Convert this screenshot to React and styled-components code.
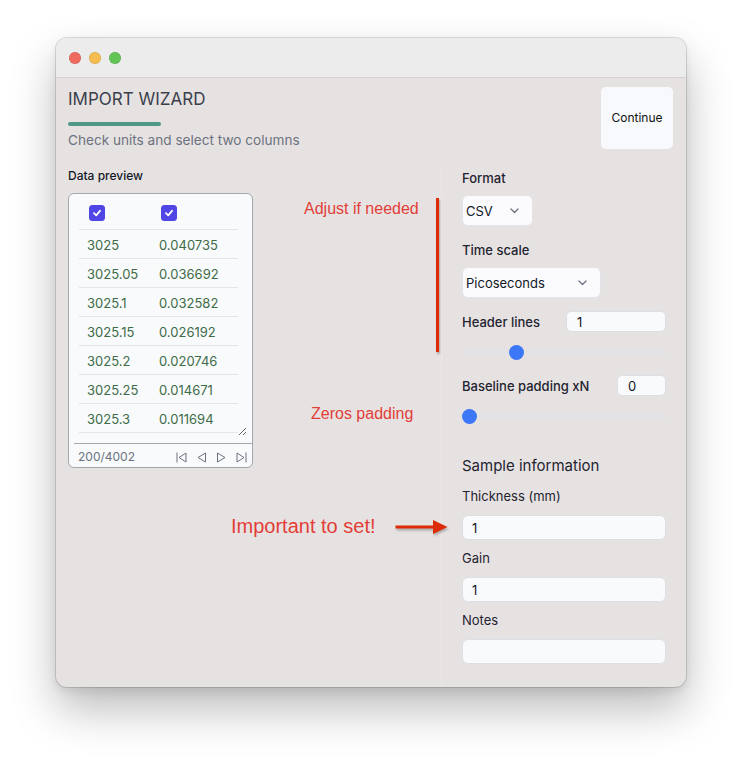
import React from 'react';
import styled, { createGlobalStyle } from 'styled-components';

const GlobalStyle = createGlobalStyle`
  html, body {
    margin: 0;
    padding: 0;
    background: #ffffff;
  }
  body {
    font-family: Inter, "Noto Sans", "DejaVu Sans", sans-serif;
    color: #1f2430;
  }
  * {
    box-sizing: border-box;
  }
`;

const Page = styled.div`
  width: 742px;
  height: 761px;
  padding: 38px 56px 0;
`;

const Window = styled.div`
  width: 630px;
  height: 649px;
  display: flex;
  flex-direction: column;
  border-radius: 11px;
  overflow: hidden;
  background: #e7e2e2;
  box-shadow: 0 0 0 1px rgba(0, 0, 0, 0.13), 0 22px 45px rgba(0, 0, 0, 0.27),
    0 4px 10px rgba(0, 0, 0, 0.08);
`;

const TitleBar = styled.div`
  flex: none;
  height: 40px;
  display: flex;
  align-items: center;
  gap: 8px;
  padding-left: 13px;
  background: #ececec;
  border-bottom: 1px solid #d6d2d2;
`;

const Light = styled.span`
  width: 12px;
  height: 12px;
  border-radius: 50%;
  background: ${(props) => props.$color};
  box-shadow: inset 0 0 0 0.5px rgba(0, 0, 0, 0.15);
`;

const Body = styled.div`
  position: relative;
  flex: 1;
  display: flex;
  flex-direction: column;
`;

const Header = styled.div`
  display: flex;
  justify-content: space-between;
  align-items: flex-start;
  padding: 9px 13px 0 12px;
`;

const Title = styled.h1`
  margin: 0;
  font-size: 17px;
  line-height: 24px;
  font-weight: 400;
  color: #3a3f4c;
`;

const Accent = styled.div`
  width: 93px;
  height: 4px;
  margin-top: 11px;
  border-radius: 2px;
  background: #4f9787;
`;

const Subtitle = styled.p`
  margin: 4px 0 0;
  font-size: 13.6px;
  line-height: 20px;
  color: #6b7280;
`;

const ContinueButton = styled.button`
  width: 72px;
  height: 62px;
  padding: 0 0 2px;
  border: none;
  border-radius: 5px;
  background: #f8f9fc;
  font-family: inherit;
  font-size: 12px;
  color: #111111;
`;

const Columns = styled.div`
  flex: 1;
  display: grid;
  grid-template-columns: 385px 1fr;
  margin-top: 15px;
`;

const LeftPane = styled.div`
  padding: 3px 0 0 12px;
`;

const SectionLabel = styled.div`
  font-size: 12px;
  line-height: 16px;
  font-weight: 500;
  color: #111827;
`;

const Card = styled.div`
  width: 185px;
  margin-top: 9px;
  padding-top: 7px;
  border: 1px solid #a3a7ae;
  border-radius: 6px;
  background: #f8fafc;
`;

const ScrollArea = styled.div`
  height: 235px;
  margin: 0 5px;
  padding: 0 9px 0 5px;
  overflow: hidden;
  resize: vertical;
`;

const Row = styled.div`
  display: grid;
  grid-template-columns: 72px 1fr;
  height: 29px;
  border-bottom: 1px solid #e2e5ea;
  align-items: ${(props) => (props.$head ? 'start' : 'center')};
  padding-top: ${(props) => (props.$head ? '3.5px' : '1px')};
`;

const Cell = styled.div`
  padding-left: 8px;
  font-size: 13px;
  line-height: 28px;
  color: #3e6b48;
`;

const Check = styled.span`
  display: flex;
  align-items: center;
  justify-content: center;
  width: 16px;
  height: 16px;
  margin-left: 10px;
  border-radius: 3.5px;
  background: #4f46e5;
`;

const Footer = styled.div`
  display: flex;
  justify-content: space-between;
  align-items: center;
  margin: 7px 0 0 5px;
  padding: 5px 5px 2px 4px;
  border-top: 1px solid #a3a7ae;
  font-size: 12px;
  line-height: 16px;
  color: #6b7280;
`;

const Pager = styled.div`
  display: flex;
  gap: 9px;
`;

const RightPane = styled.div`
  display: flex;
  flex-direction: column;
  padding: 4px 20px 0;
  border-left: 1px solid #ece8e8;
`;

const FieldLabel = styled.div`
  margin-top: ${(props) => props.$gap || 0}px;
  font-size: 13px;
  line-height: 18px;
  font-weight: 500;
  color: #1f2430;
`;

const Select = styled.div`
  width: ${(props) => props.$width}px;
  height: 31px;
  margin-top: 8px;
  display: flex;
  align-items: center;
  justify-content: space-between;
  padding: 0 13px 0 3px;
  border: 1px solid #e2e3e8;
  border-radius: 6px;
  background: #fbfbfd;
  font-size: 13px;
  color: #111827;
`;

const InlineRow = styled.div`
  display: flex;
  align-items: center;
  justify-content: space-between;
  height: 21px;
  margin-top: ${(props) => props.$gap}px;
`;

const SmallInput = styled.input`
  width: ${(props) => props.$width}px;
  height: 21px;
  padding: 0 10px;
  border: 1px solid #dcdfe4;
  border-radius: 5px;
  background: #f9fafb;
  font-family: inherit;
  font-size: 13px;
  color: #111827;
  outline: none;
`;

const SliderBox = styled.div`
  position: relative;
  display: flex;
  align-items: center;
  height: 16px;
  margin-top: 12px;
`;

const Track = styled.div`
  width: 100%;
  height: 5px;
  border-radius: 3px;
  background: #e3e2e5;
`;

const Thumb = styled.span`
  position: absolute;
  top: 0.5px;
  width: 15px;
  height: 15px;
  border-radius: 50%;
  background: #3b77f6;
`;

const Heading = styled.h2`
  margin: 30px 0 0;
  font-size: 15px;
  line-height: 24px;
  font-weight: 400;
  color: #1f2430;
`;

const InfoLabel = styled.div`
  margin-top: 8px;
  font-size: 13px;
  line-height: 20px;
  color: #1f2430;
`;

const TextInput = styled.input`
  width: 100%;
  height: 25px;
  margin-top: 9px;
  padding: 0 9px;
  border: 1px solid #dcdfe4;
  border-radius: 6px;
  background: #f9fafb;
  font-family: inherit;
  font-size: 13px;
  color: #111827;
  outline: none;
`;

const Note = styled.span`
  position: absolute;
  left: ${(props) => props.$left}px;
  top: ${(props) => props.$top}px;
  font-family: "Liberation Sans", Arial, sans-serif;
  font-size: ${(props) => props.$size}px;
  line-height: 1;
  color: #e23e38;
  white-space: nowrap;
`;

const Marker = styled.div`
  position: absolute;
  left: 380px;
  top: 120px;
  width: 3px;
  height: 154px;
  background: #dc2b05;
  box-shadow: 1px 2px 2px rgba(0, 0, 0, 0.25);
`;

const ArrowMark = styled.svg`
  position: absolute;
  left: 339px;
  top: 441px;
  filter: drop-shadow(1px 2px 1px rgba(0, 0, 0, 0.25));
`;

const rows = [
  ['3025', '0.040735'],
  ['3025.05', '0.036692'],
  ['3025.1', '0.032582'],
  ['3025.15', '0.026192'],
  ['3025.2', '0.020746'],
  ['3025.25', '0.014671'],
  ['3025.3', '0.011694'],
];

const CheckMark = () => (
  <Check>
    <svg width="10" height="10" viewBox="0 0 10 10">
      <polyline points="2,5.2 4.2,7.3 8,2.8" fill="none" stroke="#fff" strokeWidth="1.8" strokeLinecap="round" strokeLinejoin="round" />
    </svg>
  </Check>
);

const Chevron = () => (
  <svg width="9" height="6" viewBox="0 0 9 6">
    <polyline points="1,1 4.5,4.5 8,1" fill="none" stroke="#6b7280" strokeWidth="1.3" strokeLinecap="round" strokeLinejoin="round" />
  </svg>
);

const PagerIcon = ({ kind }) => {
  const tri = {
    first: '10,1 3,5.5 10,10',
    prev: '9.5,1 2,5.5 9.5,10',
    next: '1.5,1 9,5.5 1.5,10',
    last: '1,1 8,5.5 1,10',
  }[kind];
  return (
    <svg width="11" height="11" viewBox="0 0 11 11" fill="none" stroke="#6b7280" strokeWidth="1" strokeLinejoin="round">
      <polygon points={tri} />
      {kind === 'first' && <line x1="1" y1="0.5" x2="1" y2="10.5" />}
      {kind === 'last' && <line x1="10" y1="0.5" x2="10" y2="10.5" />}
    </svg>
  );
};

const Slider = ({ value, max }) => (
  <SliderBox>
    <Track />
    <Thumb style={{ left: `calc((100% - 15px) * ${value / max})` }} />
  </SliderBox>
);

const App = () => {
  return (
    <Page>
      <GlobalStyle />
      <Window>
        <TitleBar>
          <Light $color="#ee6a5f" />
          <Light $color="#f5bd4f" />
          <Light $color="#61c454" />
        </TitleBar>
        <Body>
          <Header>
            <div>
              <Title>IMPORT WIZARD</Title>
              <Accent />
              <Subtitle>Check units and select two columns</Subtitle>
            </div>
            <ContinueButton>Continue</ContinueButton>
          </Header>
          <Columns>
            <LeftPane>
              <SectionLabel>Data preview</SectionLabel>
              <Card>
                <ScrollArea>
                  <Row $head>
                    <CheckMark />
                    <CheckMark />
                  </Row>
                  {rows.map(([t, v]) => (
                    <Row key={t}>
                      <Cell>{t}</Cell>
                      <Cell>{v}</Cell>
                    </Row>
                  ))}
                </ScrollArea>
                <Footer>
                  <span>200/4002</span>
                  <Pager>
                    <PagerIcon kind="first" />
                    <PagerIcon kind="prev" />
                    <PagerIcon kind="next" />
                    <PagerIcon kind="last" />
                  </Pager>
                </Footer>
              </Card>
            </LeftPane>
            <RightPane>
              <FieldLabel>Format</FieldLabel>
              <Select $width={71}>
                <span>CSV</span>
                <Chevron />
              </Select>
              <FieldLabel $gap={15}>Time scale</FieldLabel>
              <Select $width={139}>
                <span>Picoseconds</span>
                <Chevron />
              </Select>
              <InlineRow $gap={13}>
                <FieldLabel>Header lines</FieldLabel>
                <SmallInput $width={100} defaultValue="1" />
              </InlineRow>
              <Slider value={1} max={4} />
              <InlineRow $gap={15}>
                <FieldLabel>Baseline padding xN</FieldLabel>
                <SmallInput $width={49} defaultValue="0" />
              </InlineRow>
              <Slider value={0} max={4} />
              <Heading>Sample information</Heading>
              <InfoLabel>Thickness (mm)</InfoLabel>
              <TextInput defaultValue="1" />
              <InfoLabel>Gain</InfoLabel>
              <TextInput defaultValue="1" />
              <InfoLabel>Notes</InfoLabel>
              <TextInput defaultValue="" />
            </RightPane>
          </Columns>
          <Note $left={248} $top={123} $size={16}>Adjust if needed</Note>
          <Marker />
          <Note $left={255} $top={328} $size={16}>Zeros padding</Note>
          <Note $left={175} $top={438} $size={20}>Important to set!</Note>
          <ArrowMark width="54" height="16" viewBox="0 0 54 16">
            <rect x="0.5" y="6.5" width="40" height="3" fill="#dc2b05" />
            <polygon points="38,1 52.5,8 38,15" fill="#dc2b05" />
          </ArrowMark>
        </Body>
      </Window>
    </Page>
  );
};

export default App;
